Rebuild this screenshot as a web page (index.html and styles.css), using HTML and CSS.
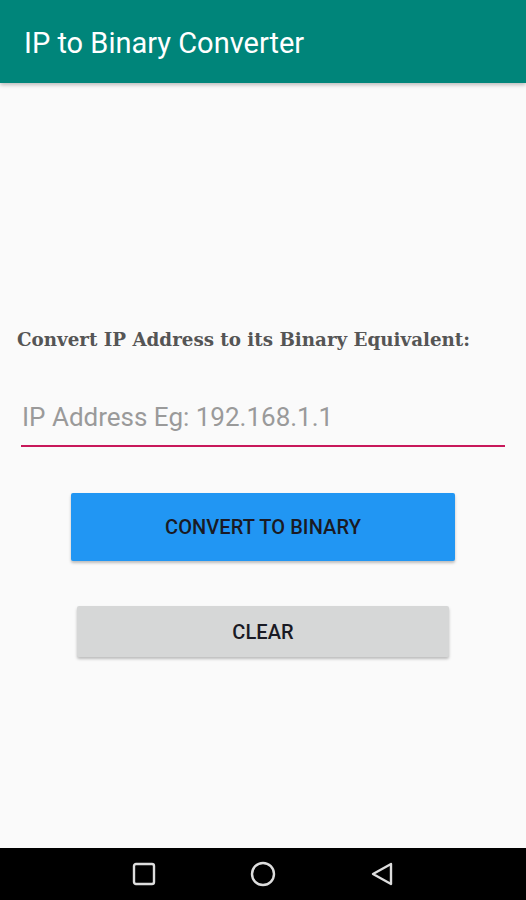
FILE: index.html
```html
<!DOCTYPE html>
<html>
<head>
<meta charset="utf-8">
<link rel="stylesheet" href="styles.css">
</head>
<body>
<div class="screen">
  <header class="appbar"><span class="title">IP to Binary Converter</span></header>
  <main class="content">
    <p class="label">Convert IP Address to its Binary Equivalent:</p>
    <div class="field"><input class="input" type="text" placeholder="IP Address Eg: 192.168.1.1"></div>
    <button class="btn btn-primary">CONVERT TO BINARY</button>
    <button class="btn btn-clear">CLEAR</button>
  </main>
  <nav class="navbar">
    <svg class="nav-icon" width="24" height="24" viewBox="0 0 24 24"><rect x="2" y="2" width="20" height="20" rx="2" fill="none" stroke="#ddd" stroke-width="2.4"/></svg>
    <svg class="nav-icon" width="26" height="26" viewBox="0 0 26 26"><circle cx="13" cy="13" r="11" fill="none" stroke="#ddd" stroke-width="2.4"/></svg>
    <svg class="nav-icon" width="24" height="24" viewBox="0 0 24 24"><path d="M21 2 L3 12 L21 22 Z" fill="none" stroke="#ddd" stroke-width="2.4" stroke-linejoin="round"/></svg>
  </nav>
</div>
</body>
</html>
```
FILE: styles.css
```css
* { box-sizing: border-box; }
html, body { margin: 0; padding: 0; }
body { width: 526px; height: 900px; overflow: hidden; background: #fafafa; font-family: Roboto, "Noto Sans", sans-serif; }
.screen { display: flex; flex-direction: column; height: 900px; }
.appbar {
  height: 83px; background: #00857a; display: flex; align-items: center;
  padding: 0 24px; box-shadow: 0 2px 4px rgba(0,0,0,0.25); position: relative; z-index: 1;
}
.title { color: #fff; font-size: 29px; font-weight: 400; margin-top: 2px; }
.content { flex: 1; display: flex; flex-direction: column; align-items: flex-start; padding-top: 244px; }
.label {
  margin: 0 0 0 17px; font-family: "DejaVu Serif", serif; font-weight: 700;
  font-size: 18.3px; color: #555; line-height: 26px;
}
.field { margin: 46px 0 0 21px; width: 484px; border-bottom: 2px solid #c8185a; padding: 0 0 10px 1px; }
.input {
  border: none; background: transparent; outline: none; width: 100%;
  font-family: Roboto, sans-serif; font-size: 26px; color: #222; padding: 0; height: 36px;
}
.input::placeholder { color: #9a9a9a; }
.btn {
  border: none; font-family: Roboto, sans-serif; font-weight: 500; color: #1a1a24;
  font-size: 20px; letter-spacing: 0.1px; border-radius: 2px;
  box-shadow: 0 2px 3px rgba(0,0,0,0.25);
}
.btn-primary { margin: 46px 0 0 71px; width: 384px; height: 68px; background: #2196f3; }
.btn-clear { margin: 45px 0 0 77px; width: 372px; height: 51px; background: #d6d7d7; }
.navbar {
  height: 52px; background: #000; display: flex; justify-content: center; align-items: center; gap: 94px;
}
.nav-icon { display: block; }
```
